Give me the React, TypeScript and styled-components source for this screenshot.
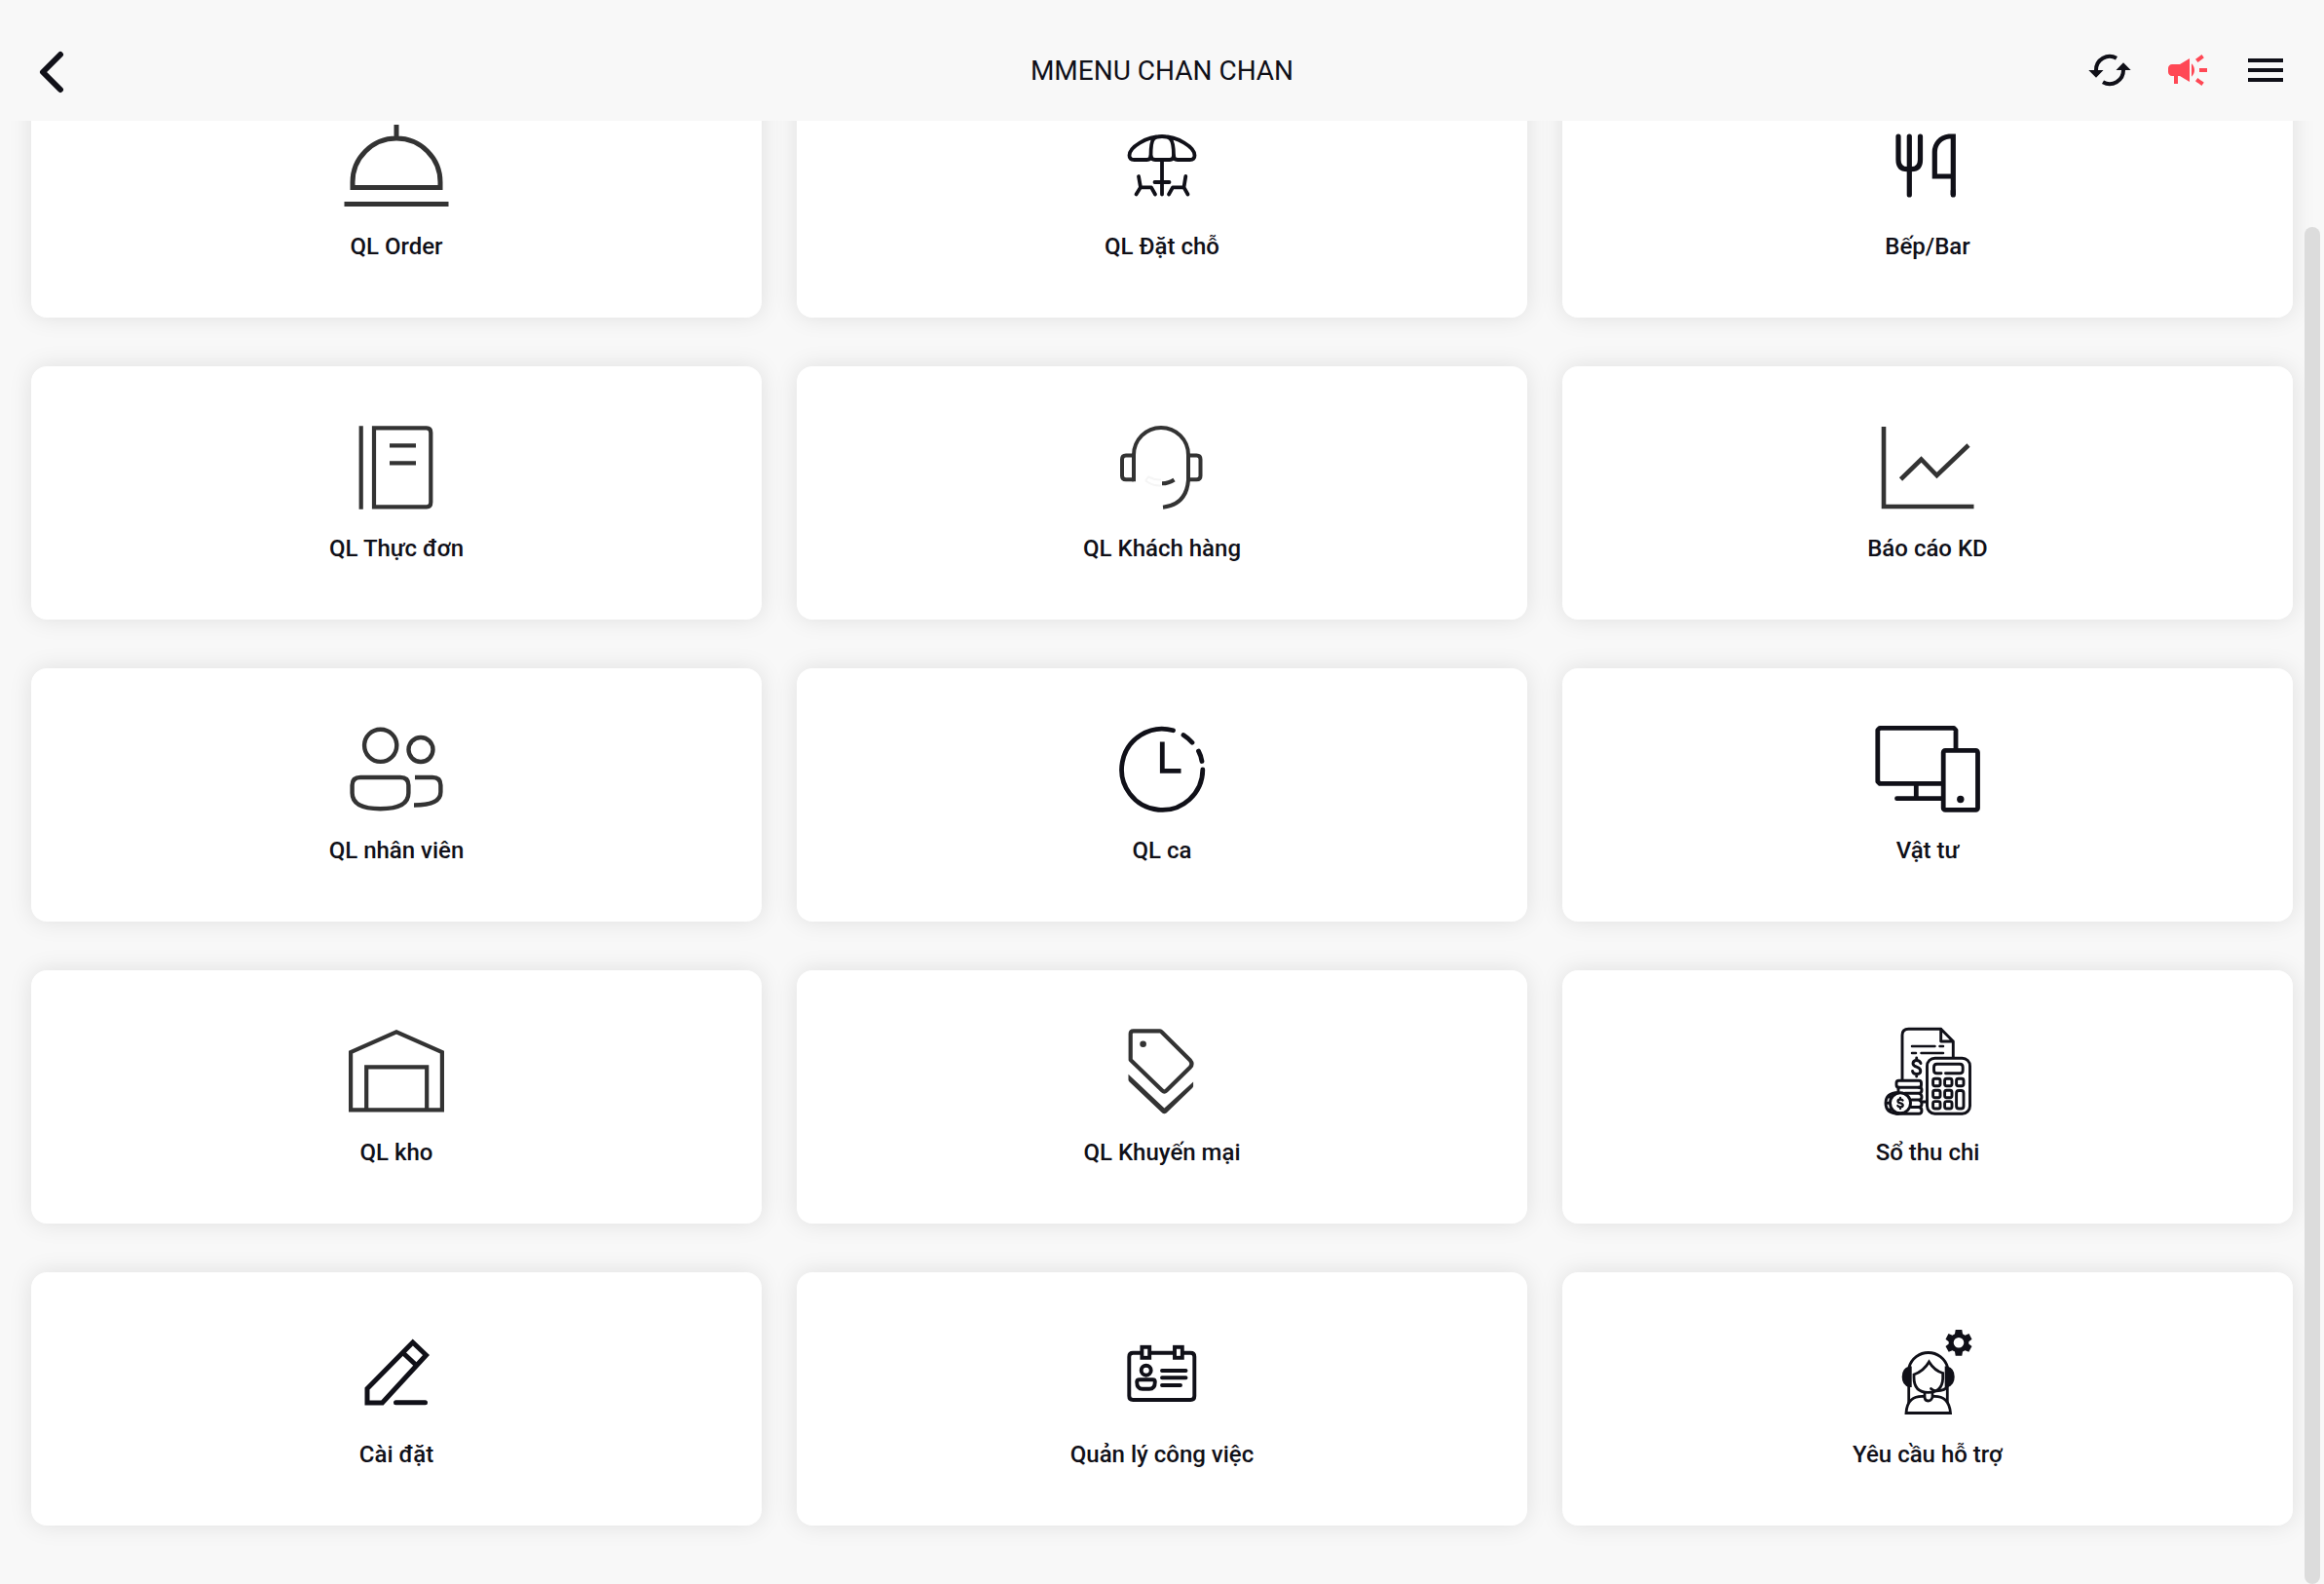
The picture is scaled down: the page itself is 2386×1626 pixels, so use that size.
import React, { useCallback, useLayoutEffect, useRef, useState } from "react";
import styled, { createGlobalStyle } from "styled-components";
import { MdCampaign, MdMenu } from "react-icons/md";

const ink = "#101018";
const charcoal = "#333333";

const GlobalStyle = createGlobalStyle`
  *, *::before, *::after { box-sizing: border-box; }
  body {
    margin: 0;
    background: #f8f8f8;
    color: ${ink};
    font-family: Roboto, "Noto Sans", sans-serif;
  }
`;

const Page = styled.div`
  display: flex;
  flex-direction: column;
  height: 100vh;
  overflow: hidden;
`;

const Header = styled.header`
  display: grid;
  grid-template-columns: 1fr auto 1fr;
  align-items: center;
  flex: none;
  height: 124px;
  padding: 20px 36px 0;
`;

const Title = styled.h1`
  margin: 0;
  padding-top: 2px;
  font-size: 28px;
  line-height: 36px;
  font-weight: 400;
`;

const Actions = styled.div`
  display: flex;
  justify-content: flex-end;
  gap: 32px;
`;

const IconButton = styled.button<{ $color?: string }>`
  display: flex;
  width: 48px;
  height: 48px;
  padding: 0;
  border: 0;
  background: none;
  color: ${(p) => p.$color ?? ink};
  cursor: pointer;
`;

const Body = styled.div`
  position: relative;
  flex: 1;
  min-height: 0;
`;

const Scroller = styled.main`
  height: 100%;
  overflow-y: auto;
  scrollbar-width: none;
`;

const Thumb = styled.div`
  position: absolute;
  top: 0;
  right: 4px;
  width: 16px;
  border-radius: 8px;
  background: #dcdcdc;
`;

const Grid = styled.nav`
  display: grid;
  grid-template-columns: repeat(3, 1fr);
  gap: 50px 36px;
  padding: 60px 32px;
`;

const Card = styled.a`
  display: flex;
  flex-direction: column;
  align-items: center;
  gap: 16px;
  padding: 54px 16px 56px;
  border-radius: 16px;
  background: #ffffff;
  box-shadow: 0 0 24px rgba(0, 0, 0, 0.1);
  color: inherit;
  text-decoration: none;
`;

const Label = styled.span`
  font-size: 24px;
  line-height: 34px;
  font-weight: 500;
`;

const Drawing = styled.svg<{ $color: string }>`
  width: 120px;
  height: 100px;
  overflow: visible;
  color: ${(p) => p.$color};
  fill: none;
  stroke: currentColor;
`;

const HeaderDrawing = styled.svg`
  width: 48px;
  height: 48px;
  fill: none;
  stroke: currentColor;
`;

type IconProps = { color?: string; width: number; round?: boolean; children: React.ReactNode };

const Icon = ({ color = ink, width, round, children }: IconProps) => (
  <Drawing
    $color={color}
    viewBox="0 0 120 100"
    strokeWidth={width}
    strokeLinecap={round ? "round" : "butt"}
    strokeLinejoin={round ? "round" : "miter"}
    aria-hidden="true"
  >
    {children}
  </Drawing>
);

const OrderIcon = () => (
  <Icon color={charcoal} width={5}>
    <path d="M60 8V21M15 72.5V67A45 45 0 0 1 105 67V72.5ZM6.500 89.500H113.500" />
  </Icon>
);

const ParasolIcon = () => (
  <Icon width={3.8} round>
    <path d="M60 20C76 20 93.500 31 93.500 39.500Q93.500 44 88.500 44H76Q72 44 72 40C72 33 71 25 68.500 22.500Q66.500 20 60 20Q53.500 20 51.500 22.500C49 25 48.500 33 48.500 40Q48.500 44 44.500 44H31.500Q26.500 44 26.500 39.500C26.500 31 44 20 60 20Z" />
    <path d="M48.500 40Q49 44 53 44H68Q71.500 44 72 40M60 44V79.500M52.500 67H67.500" />
    <path d="M36 61L38 72.300H49L53 79.500M38 72.300L33.500 79.500M84.300 61L82.500 72.300H71L67 79.500M82.500 72.300L86.500 79.500" />
  </Icon>
);

const CutleryIcon = () => (
  <Icon width={5.2}>
    <path strokeLinecap="round" d="M30 20V44Q30 53.700 39 53.700H43.500Q52.500 53.700 52.500 44V20M41.300 20V80M86.300 76V80" />
    <path d="M86.300 80V20H82C73 21 67.300 28 67.300 36V61H86.300" />
  </Icon>
);

const MenuBookIcon = () => (
  <Icon color={charcoal} width={4.2}>
    <path d="M23.700 7.300V92.700M37 9.300H91Q95.300 9.300 95.300 14V85.500Q95.300 90.300 91 90.300H37ZM53 27.300H80M53 45.300H80" />
  </Icon>
);

const HeadsetIcon = () => (
  <Icon color={charcoal} width={4}>
    <path stroke="#f5f5f5" strokeWidth={2} d="M43 63.500L46 59.500Q53 63 59 62.500M43 63.500Q51 69 59 68.500" />
    <path d="M31 64.300V37A28 28 0 0 1 87 37V63Q85 88 61 90.700" />
    <path d="M31 37.500H23Q19 37.500 19 41.500V58.500Q19 62.300 23 62.300H31M87 37.500H95.500Q99.500 37.500 99.500 41.500V58.500Q99.500 62.300 95.500 62.300H87" />
    <path d="M60 66.300Q67 66.300 72.500 62.500" />
  </Icon>
);

const ChartIcon = () => (
  <Icon color={charcoal} width={4.6}>
    <path d="M15 8V90H107.500M32.500 62L53.500 41.500L69.500 58L102 27" />
  </Icon>
);

const StaffIcon = () => (
  <Icon color={charcoal} width={4.4}>
    <circle cx="43.700" cy="25.300" r="16.600" />
    <circle cx="85" cy="29.500" r="12.500" />
    <path d="M23 58H64Q72.400 58 72.400 66V74C72.400 86 60 90.200 43.500 90.200S14.600 86 14.600 74V66Q14.600 58 23 58Z" />
    <path d="M79 58H97Q105.400 58 105.400 66V73C105.400 82 95 86.500 78 86.500" />
  </Icon>
);

const ClockIcon = () => (
  <Icon width={4.8}>
    <path strokeLinecap="round" d="M101.800 50A41.600 41.600 0 1 1 71.500 9.800M82 14.500Q87 17.700 91 22.300M97.500 31Q100 35.500 101 41.500" />
    <path d="M60.300 21.500V51.300H79.500" />
  </Icon>
);

const DevicesIcon = () => (
  <Icon width={4.8} round>
    <path d="M89 29V9.500L87 7.300H11L8.800 9.500V62.300L11 64.400H75M48.300 65V79M28.500 79.700H74" />
    <rect x="76.200" y="30.400" width="35.300" height="61" rx="2" />
    <circle cx="93.800" cy="80.500" r="3.700" fill="currentColor" stroke="none" />
  </Icon>
);

const WarehouseIcon = () => (
  <Icon color={charcoal} width={4.2}>
    <path d="M13.100 89.300V30L60 9.300L106.900 30V89.300ZM29.200 89V45.400H91.200V89" />
  </Icon>
);

const TagIcon = () => (
  <Icon color={charcoal} width={4.2}>
    <path strokeLinejoin="round" d="M30.500 8.300H57.500Q58.500 8.300 59.300 9L89 38.500Q92 42 89 45.500L64.500 69.500Q62.400 71.500 60.300 69.500L27.700 38V11Q27.700 8.300 30.500 8.300Z" />
    <path fill="currentColor" stroke="none" d="M25.500 52.700L62.400 87.500L92.100 60.500V65Q92 66 91 67L64.500 92.500Q62.400 94 60.300 92.500L26.500 60.500Q25.500 59.500 25.500 58.500Z" />
    <circle cx="40.600" cy="21.700" r="3.300" fill="currentColor" stroke="none" />
  </Icon>
);

const LedgerIcon = () => (
  <Icon width={2.9} round>
    <path d="M34 58V12.500Q34 6.300 40.500 6.300H73.700L86.300 19V35M73.700 6.300V19H86.300" />
    <path strokeWidth={2.5} d="M44 24H67.500M72.500 24H76M44 31H48M53.500 31H76" />
    <path d="M53 41.500Q52 38.500 48.700 38.500Q45 38.500 45 41.800Q45 44 48.700 45.200Q52.800 46.500 52.800 49.500Q52.800 52.500 48.700 52.500Q45 52.500 44.500 49.500M48.700 36V38M48.700 53V55" />
    <rect x="59.500" y="36.200" width="44" height="57" rx="8" />
    <path d="M74 51.800H69.500Q66.500 51.800 66.500 48.500V45.500Q66.500 42.200 69.500 42.200H93.200Q96.200 42.200 96.200 45.500V48.500Q96.200 51.800 93.200 51.800H78.500" />
    {[61, 73, 84.3].map((y) =>
      [69.3, 81.3].map((x) => (
        <rect key={`${x}-${y}`} x={x - 3.7} y={y - 3.7} width="7.400" height="7.400" rx="2" />
      )),
    )}
    <rect x="89.600" y="57.300" width="7.400" height="7.400" rx="2" />
    <rect x="89.600" y="69.500" width="7.400" height="18.500" rx="2.500" />
    <rect x="28" y="59.300" width="25.500" height="7" rx="2.500" />
    <path d="M30 66.300V70M51 66.300Q54 66.300 54 69Q54 72.300 51 72.300H37M51 72.300Q54 73 54 76Q54 79 51 79H44M51 79Q54 80 54 83Q54 86.500 51 86.500H43M51 86.500Q54 87 54 90Q54 93.300 51 93.300H28" />
    <path d="M54.500 81H58" />
    <circle cx="32" cy="82.300" r="10.500" />
    <path d="M30 71.500Q17 72 17 82.300Q17 93 30 93.300M20.500 76H22.500M18 82.300H20M20.500 89H22.500" />
    <path strokeWidth={2.3} d="M34.500 79.500Q34 78.500 32 78.500Q29.500 78.500 29.500 80.300Q29.500 82 32 82.300Q34.700 82.800 34.700 84.500Q34.700 86.300 32 86.300Q30 86.300 29.300 85M32 77V78M32 87V88" />
  </Icon>
);

const PencilIcon = () => (
  <Icon width={5} round>
    <path strokeLinejoin="miter" d="M30 80V65.500L76.800 18L90.500 31L45.500 80Z" />
    <path strokeLinecap="butt" d="M66 28L81 42" />
    <path d="M59.500 79.700H89.500" />
  </Icon>
);

const BadgeIcon = () => (
  <Icon width={3.9}>
    <path d="M39.400 28.700H30.300Q26.300 28.700 26.300 32.700V73Q26.300 77 30.300 77H89.300Q93.300 77 93.300 73V32.700Q93.300 28.700 89.300 28.700H80.600M47.200 28.700H73" />
    <rect x="39.400" y="22.800" width="7.800" height="11" />
    <rect x="73" y="22.800" width="7.800" height="11" />
    <circle cx="43.700" cy="46.700" r="5" />
    <path d="M37 56.200H50.500Q52.800 56.200 52.800 58.500Q52.800 65.800 47 65.800H40Q34.200 65.800 34.200 58.500Q34.200 56.200 37 56.200Z" />
    <path strokeLinecap="round" d="M60 47H84.500M60 54.300H84.500M60 62H79" />
  </Icon>
);

const SupportIcon = () => (
  <Icon width={2.8}>
    <path
      fillRule="evenodd"
      fill="currentColor"
      stroke="none"
      d="M88.700 5H95.300L96 9.200L98.500 10.700L102.500 9L105.500 14.700L102.300 17.200V19.600L105.500 22.100L102.300 27.800L98.500 26.200L96 27.600L95.300 31.800H88.700L88 27.600L85.500 26.200L81.700 27.800L78.500 22.100L81.700 19.600V17.200L78.500 14.700L81.500 9L85.500 10.700L88 9.200ZM92 13A5.300 5.300 0 1 0 92 23.600A5.300 5.300 0 1 0 92 13Z"
    />
    <path d="M41 43.500A20.500 20.500 0 0 1 80.500 43.500M40.700 62V80M80.300 62V80" />
    <path fill="currentColor" stroke="none" d="M43.700 42.500V64H41Q33.700 62 33.700 53.300T41 42.500ZM77.700 42.500V64H80.500Q87.700 62 87.700 53.300T80.500 42.500Z" />
    <path d="M46 51Q56 47.500 61.500 38Q67 47 75.700 49.500V55Q75 69.300 60.500 69.300Q46 69.300 46 54Z" />
    <path strokeLinecap="round" d="M63.500 65.500Q66 67.800 69 67.800Q78.500 67.800 80.300 62.500" />
    <path d="M57 69V74Q57 78 60.500 78T65 74V69M57 73.500Q39 72 38 90.500H83.500Q82 72 65 73.500" />
  </Icon>
);

const modules = [
  { label: "QL Order", Drawn: OrderIcon },
  { label: "QL Đặt chỗ", Drawn: ParasolIcon },
  { label: "Bếp/Bar", Drawn: CutleryIcon },
  { label: "QL Thực đơn", Drawn: MenuBookIcon },
  { label: "QL Khách hàng", Drawn: HeadsetIcon },
  { label: "Báo cáo KD", Drawn: ChartIcon },
  { label: "QL nhân viên", Drawn: StaffIcon },
  { label: "QL ca", Drawn: ClockIcon },
  { label: "Vật tư", Drawn: DevicesIcon },
  { label: "QL kho", Drawn: WarehouseIcon },
  { label: "QL Khuyến mại", Drawn: TagIcon },
  { label: "Sổ thu chi", Drawn: LedgerIcon },
  { label: "Cài đặt", Drawn: PencilIcon },
  { label: "Quản lý công việc", Drawn: BadgeIcon },
  { label: "Yêu cầu hỗ trợ", Drawn: SupportIcon },
];

export default function App() {
  const scroller = useRef<HTMLElement>(null);
  const [thumb, setThumb] = useState({ offset: 0, height: 0 });

  const measure = useCallback(() => {
    const el = scroller.current;
    if (!el) return;
    const ratio = el.clientHeight / el.scrollHeight;
    setThumb({
      offset: Math.round(el.scrollTop * ratio),
      height: ratio < 1 ? Math.round(el.clientHeight * ratio) : 0,
    });
  }, []);

  useLayoutEffect(() => {
    const el = scroller.current;
    if (el) el.scrollTop = el.scrollHeight;
    measure();
    window.addEventListener("resize", measure);
    return () => window.removeEventListener("resize", measure);
  }, [measure]);

  return (
    <Page>
      <GlobalStyle />
      <Header>
        <IconButton type="button" aria-label="Quay lại">
          <HeaderDrawing viewBox="0 0 48 48" strokeWidth={6} strokeLinecap="round" strokeLinejoin="round">
            <path d="M26 8L8 26L26 44" />
          </HeaderDrawing>
        </IconButton>
        <Title>MMENU CHAN CHAN</Title>
        <Actions>
          <IconButton type="button" aria-label="Đồng bộ">
            <HeaderDrawing viewBox="0 0 48 48" strokeWidth={4}>
              <path d="M10 25V24A14 14 0 0 1 31 11.800M38 23V24A14 14 0 0 1 17 36.200" />
              <path fill="currentColor" stroke="none" d="M2.300 24H17.500L10 31.700ZM30.500 24H45.700L38 16.300Z" />
            </HeaderDrawing>
          </IconButton>
          <IconButton type="button" aria-label="Thông báo" $color="#ff4855">
            <MdCampaign size={48} />
          </IconButton>
          <IconButton type="button" aria-label="Menu">
            <MdMenu size={48} />
          </IconButton>
        </Actions>
      </Header>
      <Body>
        <Scroller ref={scroller} onScroll={measure}>
          <Grid>
            {modules.map(({ label, Drawn }) => (
              <Card key={label} href="#">
                <Drawn />
                <Label>{label}</Label>
              </Card>
            ))}
          </Grid>
        </Scroller>
        <Thumb style={{ height: thumb.height, transform: `translateY(${thumb.offset}px)` }} />
      </Body>
    </Page>
  );
}
